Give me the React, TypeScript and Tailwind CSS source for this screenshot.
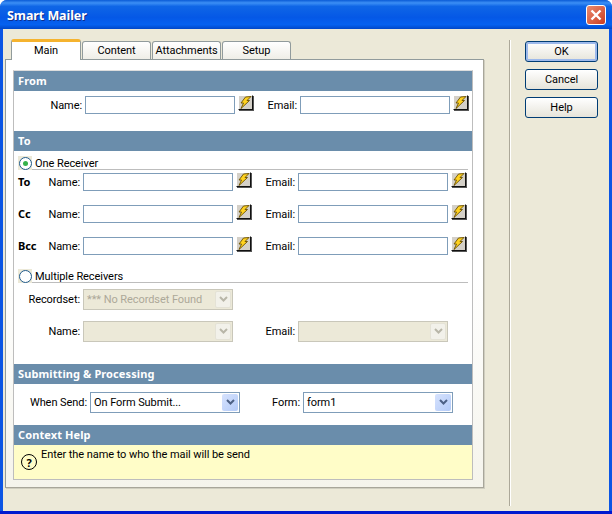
const FONT = "font-['Roboto','Liberation_Sans',sans-serif]";
const BOLD = "font-['Noto_Sans',sans-serif] font-bold";

function Bolt() {
  return (
    <div className="w-[15px] h-[15px] shrink-0 bg-[#D4D0C8] border-t border-l border-t-white border-l-white border-r border-b border-r-[#111] border-b-[#111] shadow-[1px_1px_0_#555]">
      <svg width="13" height="13" viewBox="0 0 13 13" className="block">
        <path d="M6.5 1 L12 0.5 L8 4.5 L10.5 4.5 L2 12.5 L4.5 7 L2 7 Z" fill="#FFD21F" stroke="#6B5000" strokeWidth="0.9" />
      </svg>
    </div>
  );
}

function TextBox() {
  return <div className="w-[150px] h-[18px] shrink-0 bg-white border border-[#7F9DB9]" />;
}

function Chevron({ color }: { color: string }) {
  return (
    <svg width="9" height="7" viewBox="0 0 9 7">
      <path d="M1 1 L4.5 4.5 L8 1" fill="none" stroke={color} strokeWidth="2" />
    </svg>
  );
}

function Select({ text, disabled, width }: { text?: string; disabled?: boolean; width: string }) {
  if (disabled) {
    return (
      <div className={`${width} h-[21px] shrink-0 flex items-center bg-[#ECE9D8] border border-[#C9C7BA] p-px`}>
        <span className="flex-1 pl-[2px] pt-px truncate text-[#ACA899]">{text}</span>
        <div className="w-[16px] h-[17px] flex items-center justify-center bg-[#F2F1EA] border border-[#E4E2D6] rounded-[2px]">
          <Chevron color="#B8B6A8" />
        </div>
      </div>
    );
  }
  return (
    <div className={`${width} h-[21px] shrink-0 flex items-center bg-white border border-[#7F9DB9] p-px`}>
      <span className="flex-1 pl-[2px] pt-px truncate text-black">{text}</span>
      <div className="w-[16px] h-[17px] flex items-center justify-center bg-gradient-to-br from-[#D6E2FD] to-[#B4CBF8] rounded-[2px]">
        <Chevron color="#4D6185" />
      </div>
    </div>
  );
}

function SectionHeader({ children }: { children: React.ReactNode }) {
  return <div className={`h-[20px] flex items-center pl-[4px] bg-[#6A8DAB] text-white tracking-[0.1px] ${BOLD}`}>{children}</div>;
}

function Radio({ checked }: { checked?: boolean }) {
  return (
    <div className="w-[14px] h-[14px] shrink-0 bg-[#ECE9D8] flex items-center justify-center">
      <div className="w-[13px] h-[13px] rounded-full bg-white border border-[#1F5A8C] flex items-center justify-center">
        {checked && <div className="w-[5px] h-[5px] rounded-full bg-[#35B24A]" />}
      </div>
    </div>
  );
}

function RadioRow({ label, checked, className }: { label: string; checked?: boolean; className: string }) {
  return (
    <div className={`flex w-[450px] ml-[4px] ${className}`}>
      <Radio checked={checked} />
      <div className="flex-1 h-[14px] pl-[3px] pt-px border-b border-[#BDBDBD] leading-[13px]">{label}</div>
    </div>
  );
}

function PersonRow({ tag, className }: { tag: string; className: string }) {
  return (
    <div className={`flex items-start h-[18px] leading-[18px] ${className}`}>
      <span className={`w-[31px] pl-[4px] ${BOLD}`}>{tag}</span>
      <span className="w-[35px] pt-px text-right">Name:</span>
      <div className="w-[3px]" />
      <TextBox />
      <div className="w-[3px]" />
      <div className="-mt-px"><Bolt /></div>
      <span className="w-[44px] pt-px text-right">Email:</span>
      <div className="w-[3px]" />
      <TextBox />
      <div className="w-[3px]" />
      <div className="-mt-px"><Bolt /></div>
    </div>
  );
}

function DialogButton({ label, primary }: { label: string; primary?: boolean }) {
  return (
    <div
      className={`w-[73px] h-[21px] pt-px flex items-center justify-center rounded-[3px] border border-[#003C74] bg-gradient-to-b from-white to-[#E6E4DA] text-black ${
        primary ? "shadow-[inset_0_0_0_2px_#9DB9EB]" : ""
      }`}
    >
      {label}
    </div>
  );
}

const TABS = ["Content", "Attachments", "Setup"];

export default function App() {
  return (
    <div className={`w-[612px] h-[514px] flex flex-col overflow-hidden rounded-t-[7px] text-[11px] tracking-[-0.07px] text-black bg-[#0B55E4] ${FONT}`}>
      <div className="h-[29px] shrink-0 flex items-center justify-between pl-[7px] pr-[6px] pt-[3px] bg-[linear-gradient(180deg,#0A5BD6_0%,#3C8FF5_10%,#0F66E6_22%,#0558E6_60%,#0561F0_85%,#0047C8_100%)]">
        <span className={`text-white text-[12.5px] [text-shadow:1px_1px_0_#0F2F8C] ${BOLD}`}>Smart Mailer</span>
        <div className="w-[20px] h-[20px] -mt-[3px] flex items-center justify-center rounded-[3px] border border-white bg-gradient-to-br from-[#E98A6F] to-[#CC3A1C]">
          <svg width="12" height="12" viewBox="0 0 12 12">
            <path d="M1.5 1.5 L10.5 10.5 M10.5 1.5 L1.5 10.5" stroke="white" strokeWidth="2.4" />
          </svg>
        </div>
      </div>

      <div className="flex-1 flex mx-[3px] bg-[#ECE9D8] min-h-0">
        <div className="w-[482px] shrink-0 pl-[2px] pt-[10px]">
          <div className="flex items-end ml-[6px] h-[21px] relative z-10">
            <div className="w-[70px] h-[21px] flex items-center justify-center rounded-t-[3px] bg-white border-t-[3px] border-t-[#F5B32F] border-x border-x-[#919B9C] mr-px">
              Main
            </div>
            {TABS.map((t) => (
              <div
                key={t}
                className="w-[69px] h-[18px] mb-px pt-px flex items-center justify-center rounded-t-[3px] border border-b-0 border-[#919B9C] bg-gradient-to-b from-white to-[#EFEEE7] mr-px"
              >
                {t}
              </div>
            ))}
          </div>

          <div className="w-[479px] h-[429px] -mt-px pt-[10px] pl-[7px] bg-gradient-to-b from-white via-white to-[#F5F4EC] border border-[#919B9C] border-r-[#A8A69A] border-b-[#A8A69A] shadow-[1px_1px_0_#D0CEC0]">
            <div className="w-[460px] bg-white border border-[#BDBDBD] border-t-[#DDDDDD]">
              <SectionHeader>From</SectionHeader>
              <div className="h-[40px] pt-[5px]">
                <div className="flex items-start h-[18px] leading-[18px]">
                  <span className="w-[68px] pt-px text-right">Name:</span>
                  <div className="w-[3px]" />
                  <TextBox />
                  <div className="w-[3px]" />
                  <div className="-mt-px"><Bolt /></div>
                  <span className="w-[44px] pt-px text-right">Email:</span>
                  <div className="w-[3px]" />
                  <TextBox />
                  <div className="w-[3px]" />
                  <div className="-mt-px"><Bolt /></div>
                </div>
              </div>

              <SectionHeader>To</SectionHeader>
              <div className="h-[213px] pt-[5px]">
                <RadioRow label="One Receiver" checked className="" />
                <PersonRow tag="To" className="mt-[3px]" />
                <PersonRow tag="Cc" className="mt-[14px]" />
                <PersonRow tag="Bcc" className="mt-[14px]" />
                <RadioRow label="Multiple Receivers" className="mt-[14px]" />
                <div className="flex items-center mt-[6px] h-[21px]">
                  <span className="w-[66px] pt-px text-right">Recordset:</span>
                  <div className="w-[3px]" />
                  <Select disabled width="w-[150px]" text="*** No Recordset Found" />
                </div>
                <div className="flex items-center mt-[11px] h-[21px]">
                  <span className="w-[66px] pt-px text-right">Name:</span>
                  <div className="w-[3px]" />
                  <Select disabled width="w-[150px]" />
                  <span className="w-[62px] pt-px text-right">Email:</span>
                  <div className="w-[3px]" />
                  <Select disabled width="w-[150px]" />
                </div>
              </div>

              <SectionHeader>Submitting &amp; Processing</SectionHeader>
              <div className="h-[41px] pt-[8px]">
                <div className="flex items-center h-[21px]">
                  <span className="w-[73px] pt-px text-right">When Send:</span>
                  <div className="w-[3px]" />
                  <Select width="w-[150px]" text="On Form Submit..." />
                  <span className="w-[60px] pt-px text-right">Form:</span>
                  <div className="w-[3px]" />
                  <Select width="w-[150px]" text="form1" />
                </div>
              </div>

              <SectionHeader>Context Help</SectionHeader>
              <div className="h-[34px] flex items-start pl-[7px] pt-[3px] bg-[#FFFDC8]">
                <div className={`w-[16px] h-[16px] mt-[6px] shrink-0 rounded-full border-[1.5px] border-black flex items-center justify-center text-[11px] leading-none ${BOLD}`}>
                  ?
                </div>
                <span className="ml-[4px] leading-[14px]">Enter the name to who the mail will be send</span>
              </div>
            </div>
          </div>
        </div>

        <div className="w-[2px] shrink-0 ml-[24px] mt-[11px] mb-[5px] border-l border-[#ACA899] border-r-white border-r" />

        <div className="flex flex-col gap-[7px] ml-[14px] pt-[12px]">
          <DialogButton label="OK" primary />
          <DialogButton label="Cancel" />
          <DialogButton label="Help" />
        </div>
      </div>

      <div className="h-[3px] shrink-0 bg-[#0019CF]" />
    </div>
  );
}
